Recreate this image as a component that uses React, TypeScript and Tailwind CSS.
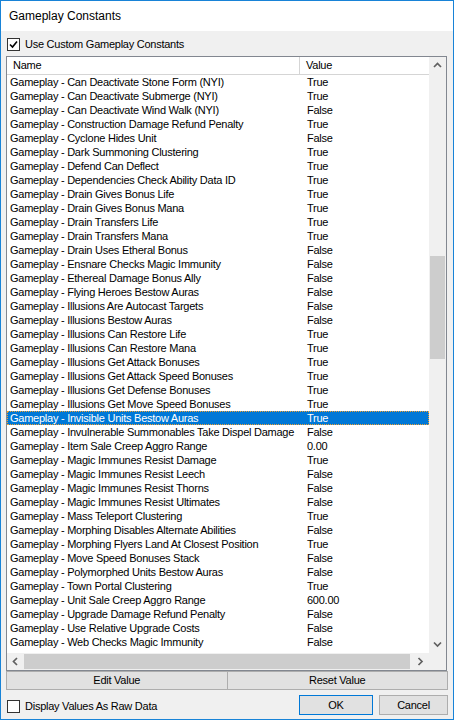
import React from "react";

const rows: [string, string][] = [
  ["Can Deactivate Stone Form (NYI)", "True"],
  ["Can Deactivate Submerge (NYI)", "True"],
  ["Can Deactivate Wind Walk (NYI)", "False"],
  ["Construction Damage Refund Penalty", "True"],
  ["Cyclone Hides Unit", "False"],
  ["Dark Summoning Clustering", "True"],
  ["Defend Can Deflect", "True"],
  ["Dependencies Check Ability Data ID", "True"],
  ["Drain Gives Bonus Life", "True"],
  ["Drain Gives Bonus Mana", "True"],
  ["Drain Transfers Life", "True"],
  ["Drain Transfers Mana", "True"],
  ["Drain Uses Etheral Bonus", "False"],
  ["Ensnare Checks Magic Immunity", "False"],
  ["Ethereal Damage Bonus Ally", "False"],
  ["Flying Heroes Bestow Auras", "False"],
  ["Illusions Are Autocast Targets", "False"],
  ["Illusions Bestow Auras", "False"],
  ["Illusions Can Restore Life", "True"],
  ["Illusions Can Restore Mana", "True"],
  ["Illusions Get Attack Bonuses", "True"],
  ["Illusions Get Attack Speed Bonuses", "True"],
  ["Illusions Get Defense Bonuses", "True"],
  ["Illusions Get Move Speed Bonuses", "True"],
  ["Invisible Units Bestow Auras", "True"],
  ["Invulnerable Summonables Take Dispel Damage", "False"],
  ["Item Sale Creep Aggro Range", "0.00"],
  ["Magic Immunes Resist Damage", "True"],
  ["Magic Immunes Resist Leech", "False"],
  ["Magic Immunes Resist Thorns", "False"],
  ["Magic Immunes Resist Ultimates", "False"],
  ["Mass Teleport Clustering", "True"],
  ["Morphing Disables Alternate Abilities", "False"],
  ["Morphing Flyers Land At Closest Position", "True"],
  ["Move Speed Bonuses Stack", "False"],
  ["Polymorphed Units Bestow Auras", "False"],
  ["Town Portal Clustering", "True"],
  ["Unit Sale Creep Aggro Range", "600.00"],
  ["Upgrade Damage Refund Penalty", "False"],
  ["Use Relative Upgrade Costs", "False"],
  ["Web Checks Magic Immunity", "False"],
];

const SELECTED = 24;

function Checkbox({ checked }: { checked: boolean }) {
  return (
    <div className="w-[13px] h-[13px] border border-[#333333] bg-white flex items-center justify-center shrink-0">
      {checked && (
        <svg width="9" height="9" viewBox="0 0 9 9">
          <polyline points="1,4.5 3.5,7 8,1.5" fill="none" stroke="#000" strokeWidth="1.6" />
        </svg>
      )}
    </div>
  );
}

function Chevron({ dir }: { dir: "up" | "down" | "left" | "right" }) {
  const pts: Record<string, string> = {
    up: "1,6 4.5,2.5 8,6",
    down: "1,2.5 4.5,6 8,2.5",
    left: "6,1 2.5,4.5 6,8",
    right: "2.5,1 6,4.5 2.5,8",
  };
  return (
    <svg width="9" height="9" viewBox="0 0 9 9">
      <polyline points={pts[dir]} fill="none" stroke="#606060" strokeWidth="1.7" />
    </svg>
  );
}

export default function App() {
  return (
    <div className="w-[454px] h-[720px] border border-[#1883d7] bg-[#f0f0f0] flex flex-col font-['Liberation_Sans',Arial,sans-serif] text-black overflow-hidden">
      {/* Title bar */}
      <div className="h-[30px] bg-white flex items-center pl-[8px] text-[12px] shrink-0">
        Gameplay Constants
      </div>

      {/* Use custom checkbox */}
      <div className="flex items-center gap-[5px] ml-[6px] mt-[7px] h-[13px] text-[11px] tracking-[-0.25px]">
        <Checkbox checked />
        <span>Use Custom Gameplay Constants</span>
      </div>

      {/* List box */}
      <div className="ml-[5px] mr-[6px] mt-[5px] h-[615px] border border-[#828790] bg-white flex flex-col shrink-0">
        <div className="flex flex-1 min-h-0">
          <div className="flex-1 flex flex-col min-w-0">
            {/* Header */}
            <div className="h-[18px] flex border-b border-[#d5d5d5] text-[11px] tracking-[-0.25px] shrink-0">
              <div className="w-[293px] border-r border-[#d5d5d5] pl-[6px] flex items-center">Name</div>
              <div className="flex-1 pl-[6px] flex items-center">Value</div>
            </div>
            {/* Rows */}
            <div className="flex flex-col text-[11px] tracking-[-0.25px]">
              {rows.map(([name, value], i) => {
                const sel = i === SELECTED;
                return (
                  <div
                    key={i}
                    className={
                      sel
                        ? "h-[14px] flex items-center bg-[#0078d7] text-white border border-dotted border-[#f0a030]"
                        : "h-[14px] flex items-center border border-transparent"
                    }
                  >
                    <div className="w-[293px] pl-[2px] whitespace-nowrap overflow-hidden">Gameplay - {name}</div>
                    <div className="flex-1 pl-[6px] whitespace-nowrap">{value}</div>
                  </div>
                );
              })}
            </div>
          </div>
          {/* Vertical scrollbar */}
          <div className="w-[17px] bg-[#f0f0f0] flex flex-col shrink-0">
            <div className="h-[17px] flex items-center justify-center">
              <Chevron dir="up" />
            </div>
            <div className="flex-1 flex flex-col px-[1px]">
              <div className="h-[182px]" />
              <div className="h-[103px] bg-[#cdcdcd]" />
            </div>
            <div className="h-[17px] flex items-center justify-center">
              <Chevron dir="down" />
            </div>
          </div>
        </div>
        {/* Horizontal scrollbar */}
        <div className="h-[17px] flex bg-[#f0f0f0] shrink-0">
          <div className="w-[17px] flex items-center justify-center">
            <Chevron dir="left" />
          </div>
          <div className="flex-1 flex py-[1px]">
            <div className="w-[386px] bg-[#cdcdcd]" />
          </div>
          <div className="w-[17px] flex items-center justify-center">
            <Chevron dir="right" />
          </div>
          <div className="w-[17px]" />
        </div>
      </div>

      {/* Edit / Reset buttons */}
      <div className="flex ml-[5px] mr-[5px] h-[19px] text-[11px] tracking-[-0.25px] shrink-0">
        <div className="flex-1 border border-[#adadad] bg-[#e1e1e1] flex items-center justify-center">Edit Value</div>
        <div className="flex-1 border border-l-0 border-[#adadad] bg-[#e1e1e1] flex items-center justify-center">Reset Value</div>
      </div>

      {/* Bottom row */}
      <div className="flex items-center ml-[6px] mr-[5px] mt-[5px] text-[11px] tracking-[-0.25px]">
        <div className="flex items-center gap-[5px] mt-[3px]">
          <Checkbox checked={false} />
          <span>Display Values As Raw Data</span>
        </div>
        <div className="ml-auto flex gap-[6px]">
          <div className="w-[74px] h-[20px] border border-[#0078d7] bg-[#e1e1e1] flex items-center justify-center">OK</div>
          <div className="w-[69px] h-[20px] border border-[#adadad] bg-[#e1e1e1] flex items-center justify-center">Cancel</div>
        </div>
      </div>
    </div>
  );
}
